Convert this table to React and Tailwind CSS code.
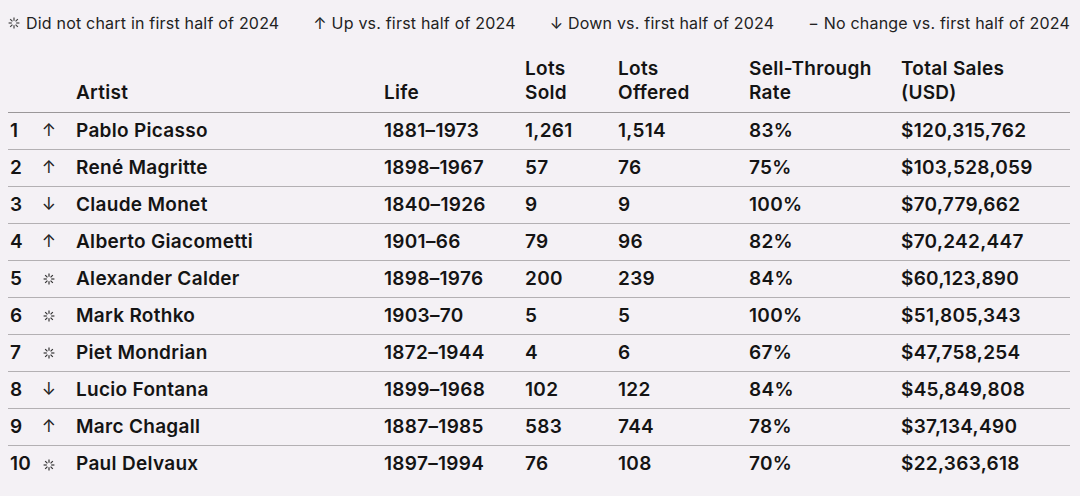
import React from "react";

const rows = [
  ["1", "up", "Pablo Picasso", "1881–1973", "1,261", "1,514", "83%", "$120,315,762"],
  ["2", "up", "René Magritte", "1898–1967", "57", "76", "75%", "$103,528,059"],
  ["3", "down", "Claude Monet", "1840–1926", "9", "9", "100%", "$70,779,662"],
  ["4", "up", "Alberto Giacometti", "1901–66", "79", "96", "82%", "$70,242,447"],
  ["5", "new", "Alexander Calder", "1898–1976", "200", "239", "84%", "$60,123,890"],
  ["6", "new", "Mark Rothko", "1903–70", "5", "5", "100%", "$51,805,343"],
  ["7", "new", "Piet Mondrian", "1872–1944", "4", "6", "67%", "$47,758,254"],
  ["8", "down", "Lucio Fontana", "1899–1968", "102", "122", "84%", "$45,849,808"],
  ["9", "up", "Marc Chagall", "1887–1985", "583", "744", "78%", "$37,134,490"],
  ["10", "new", "Paul Delvaux", "1897–1994", "76", "108", "70%", "$22,363,618"],
];

function Burst({ className = "" }) {
  const lines = [];
  for (let i = 0; i < 8; i++) {
    const a = (i * Math.PI) / 4;
    const r1 = 2.2, r2 = 5.4;
    lines.push(
      <line
        key={i}
        x1={6 + r1 * Math.cos(a)}
        y1={6 + r1 * Math.sin(a)}
        x2={6 + r2 * Math.cos(a)}
        y2={6 + r2 * Math.sin(a)}
        stroke="currentColor"
        strokeWidth="1.2"
      />
    );
  }
  return (
    <svg width="12" height="12" viewBox="0 0 12 12" className={`shrink-0 ${className}`}>
      {lines}
    </svg>
  );
}

function Mark({ t }) {
  if (t === "new") return <Burst className="text-[#333]" />;
  return (
    <span className="text-[17px] font-normal text-[#222]">{t === "up" ? "↑" : "↓"}</span>
  );
}

const cols = "grid grid-cols-[36px_32px_308px_141px_93px_131px_152px_169px]";

export default function App() {
  return (
    <div
      className="w-[1080px] h-[496px] bg-[#f4f1f5] text-[#141414] overflow-hidden"
      style={{ fontFamily: "Inter, 'Liberation Sans', sans-serif" }}
    >
      <div className="flex items-center justify-between pl-[8px] pr-[10px] h-[45px] text-[16px] text-[#222] tracking-[0.2px]">
        <div className="flex items-center gap-[6px]">
          <Burst className="text-[#444]" />
          <span>Did not chart in first half of 2024</span>
        </div>
        <div>↑ Up vs. first half of 2024</div>
        <div>↓ Down vs. first half of 2024</div>
        <div>− No change vs. first half of 2024</div>
      </div>
      <div className="mx-[8px] w-[1062px] mt-[12px]">
        <div className={`${cols} items-end border-b border-[#9a9799] pb-[7px] text-[19px] leading-[24px] font-semibold tracking-[0.3px]`}>
          <div />
          <div />
          <div>Artist</div>
          <div>Life</div>
          <div>Lots<br />Sold</div>
          <div>Lots<br />Offered</div>
          <div>Sell-Through<br />Rate</div>
          <div>Total Sales<br />(USD)</div>
        </div>
        {rows.map((r, i) => (
          <div
            key={r[0]}
            className={`${cols} items-center h-[37px] text-[19px] font-semibold tracking-[0.3px] ${i < rows.length - 1 ? "border-b border-[#b3b0b3]" : ""}`}
          >
            <div className="pl-[2px]">{r[0]}</div>
            <div className="flex items-center justify-center w-[10px]">
              <Mark t={r[1]} />
            </div>
            <div>{r[2]}</div>
            <div>{r[3]}</div>
            <div>{r[4]}</div>
            <div>{r[5]}</div>
            <div>{r[6]}</div>
            <div>{r[7]}</div>
          </div>
        ))}
      </div>
    </div>
  );
}
